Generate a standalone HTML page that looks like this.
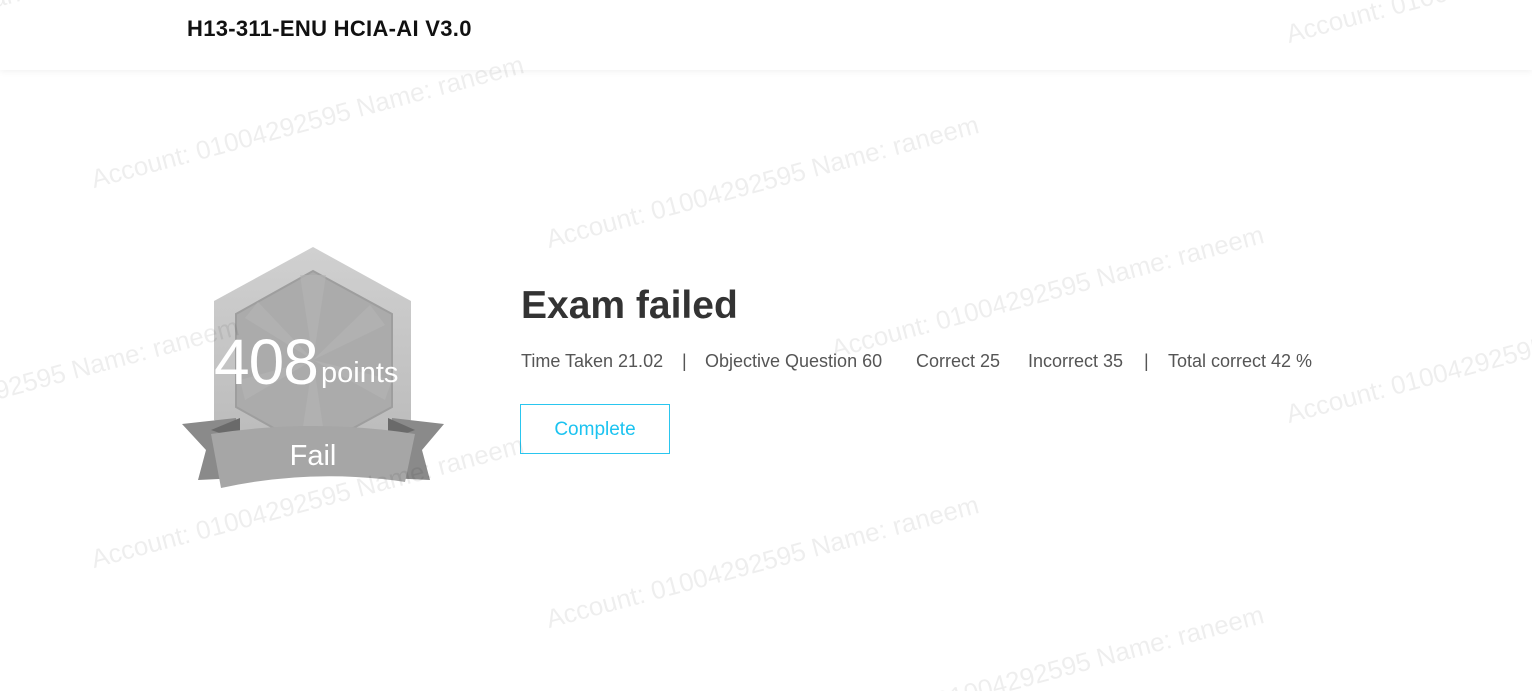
<!DOCTYPE html>
<html><head><meta charset="utf-8"><style>
html,body{margin:0;padding:0;width:1532px;height:691px;overflow:hidden;background:#fff;font-family:"Liberation Sans",sans-serif;position:relative}
.wrap{position:absolute;left:0;top:0;width:1532px;height:691px;overflow:hidden}
.hdr{position:absolute;left:0;top:0;width:1532px;height:70px;background:#fff;box-shadow:0 2px 6px rgba(0,0,0,0.05)}
.hdr h1{position:absolute;left:187px;top:16px;margin:0;font-size:22px;font-weight:bold;color:#111;letter-spacing:0.3px}
.wm{position:absolute;font-size:26px;color:rgba(0,0,0,0.065);white-space:nowrap;transform-origin:0 100%;transform:rotate(-15deg);line-height:1;z-index:5;pointer-events:none}
.t{position:absolute;color:#555;font-size:18px;white-space:nowrap;line-height:1}
h2{position:absolute;left:521px;top:284px;margin:0;font-size:39px;font-weight:bold;color:#333}
.btn{position:absolute;left:520px;top:404px;width:148px;height:48px;border:1px solid #2ac6ef;color:#1cc3f0;font-size:19px;text-align:center;line-height:50px}
</style></head><body><div class="wrap">
<div class="hdr"><h1>H13-311-ENU HCIA-AI V3.0</h1></div>

<svg style="position:absolute;left:170px;top:240px" width="290" height="260" viewBox="170 240 290 260">
<defs><linearGradient id="g1" x1="0" y1="0" x2="0" y2="1"><stop offset="0" stop-color="#d0d0d0"/><stop offset="1" stop-color="#b8b8b8"/></linearGradient></defs>
<polygon points="313,247 411,301 411,420 313,474 214,420 214,301" fill="url(#g1)"/>
<polygon points="313,271 392,314 392,407 313,450 236,407 236,314" fill="#ababab" stroke="#9e9e9e" stroke-width="2"/>
<g fill="#b6b6b6" opacity="0.6">
<polygon points="313,360 300,275 326,275"/><polygon points="313,360 370,305 385,325"/><polygon points="313,360 392,380 385,400"/>
<polygon points="313,360 326,447 300,447"/><polygon points="313,360 245,400 240,380"/><polygon points="313,360 245,318 258,302"/>
</g>
<polygon points="182,424 236,418 240,478 198,480 206,450" fill="#8a8a8a"/>
<polygon points="444,424 392,418 388,478 430,480 422,450" fill="#8a8a8a"/>
<polygon points="211,430 240,418 240,440" fill="#6a6a6a"/>
<polygon points="415,430 388,418 388,440" fill="#6a6a6a"/>
<path d="M211,434 Q313,418 415,434 L405,482 Q313,468 221,488 Z" fill="#a6a6a6"/>
<text x="214" y="384" fill="#fff" font-family="Liberation Sans,sans-serif" font-size="64" letter-spacing="-1">408</text>
<text x="321" y="382" fill="#fff" font-family="Liberation Sans,sans-serif" font-size="29">points</text>
<text x="313" y="465" fill="#fff" font-family="Liberation Sans,sans-serif" font-size="29" text-anchor="middle">Fail</text>
</svg>

<h2>Exam failed</h2>
<div class="t" style="left:521px;top:352px">Time Taken 21.02</div>
<div class="t" style="left:682px;top:352px">|</div>
<div class="t" style="left:705px;top:352px">Objective Question 60</div>
<div class="t" style="left:916px;top:352px">Correct 25</div>
<div class="t" style="left:1028px;top:352px">Incorrect 35</div>
<div class="t" style="left:1144px;top:352px">|</div>
<div class="t" style="left:1168px;top:352px">Total correct 42 %</div>
<div class="btn">Complete</div>

<div class="wm" style="left:95px;top:166px">Account: 01004292595 Name: raneem</div>
<div class="wm" style="left:550px;top:226px">Account: 01004292595 Name: raneem</div>
<div class="wm" style="left:835px;top:336px">Account: 01004292595 Name: raneem</div>
<div class="wm" style="left:-190px;top:428px">Account: 01004292595 Name: raneem</div>
<div class="wm" style="left:95px;top:546px">Account: 01004292595 Name: raneem</div>
<div class="wm" style="left:550px;top:606px">Account: 01004292595 Name: raneem</div>
<div class="wm" style="left:1290px;top:21px">Account: 01004292595 Name: raneem</div>
<div class="wm" style="left:1290px;top:401px">Account: 01004292595 Name: raneem</div>
<div class="wm" style="left:835px;top:716px">Account: 01004292595 Name: raneem</div>
<div class="wm" style="left:-360px;top:81px">Account: 01004292595 Name: raneem</div>
</div></body></html>
